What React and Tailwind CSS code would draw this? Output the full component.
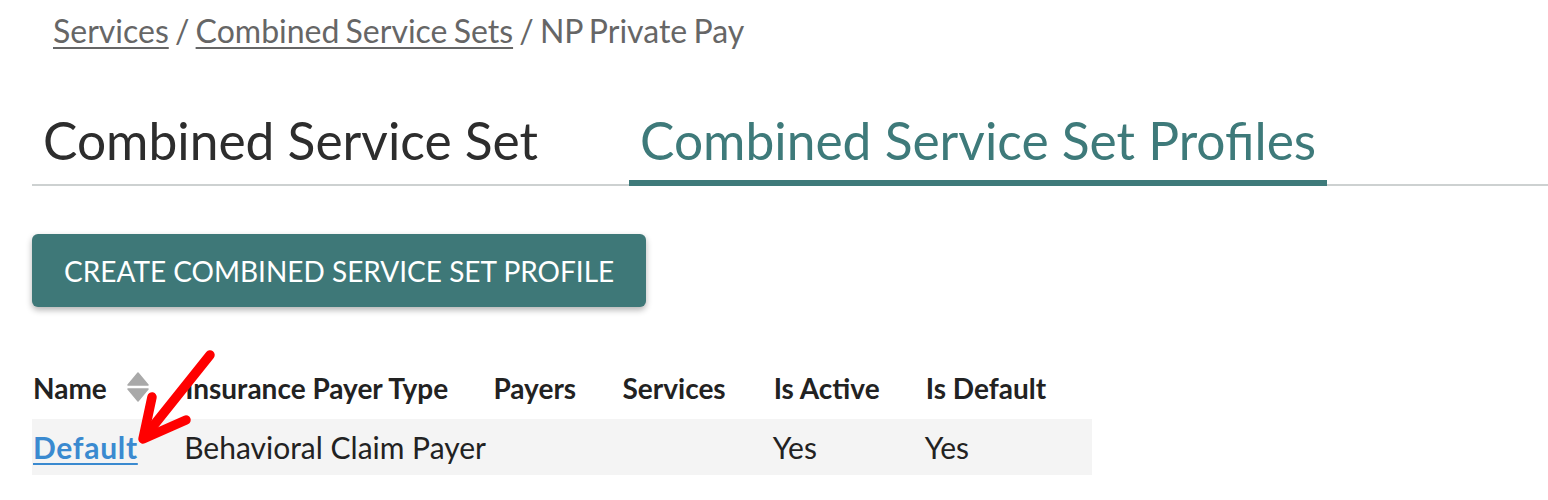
import React from "react";

const font = { fontFamily: "Lato, 'Open Sans', sans-serif" };

function SortIcon() {
  return (
    <svg width="22" height="30" viewBox="0 0 22 30" className="inline-block">
      <path d="M11 1 L21 13 H1 Z" fill="#a9a9a9" strokeLinejoin="round" stroke="#a9a9a9" strokeWidth="1.5" />
      <path d="M1 17 H21 L11 29 Z" fill="#a9a9a9" strokeLinejoin="round" stroke="#a9a9a9" strokeWidth="1.5" />
    </svg>
  );
}

function RedArrow() {
  return (
    <svg
      className="absolute pointer-events-none"
      style={{ left: 130, top: 340 }}
      width="100"
      height="110"
      viewBox="0 0 100 110"
    >
      <g stroke="#ff0000" strokeWidth="9.5" strokeLinecap="round" strokeLinejoin="round" fill="none">
        <line x1="80" y1="15" x2="16" y2="95" />
        <polyline points="22,57 13,99 56,80" />
      </g>
    </svg>
  );
}

export default function App() {
  const headers = [
    { label: "Name", w: "w-[152px]", sort: true },
    { label: "Insurance Payer Type", w: "w-[308px]" },
    { label: "Payers", w: "w-[129px]" },
    { label: "Services", w: "w-[151px]" },
    { label: "Is Active", w: "w-[152px]" },
    { label: "Is Default", w: "w-[167px]" },
  ];

  return (
    <div className="relative min-h-[500px] bg-white px-8 text-[#222]" style={font}>
      {/* Breadcrumb */}
      <div className="pl-[21px] pt-[11px] text-[32px] leading-[40px] text-[#666] [word-spacing:-2px]">
        <a className="underline decoration-2 underline-offset-4">Services</a>
        <span> / </span>
        <a className="underline decoration-2 underline-offset-4">Combined Service Sets</a>
        <span> / NP Private Pay</span>
      </div>

      {/* Tabs */}
      <div className="mt-[59px] flex items-end border-b-2 border-[#cdd1d1] -mr-8">
        <div className="px-[11px] pb-[14px] text-[51.5px] leading-[60px] text-[#2d2d2d]">
          Combined Service Set
        </div>
        <div className="ml-[80px] -mb-[2px] border-b-[6px] border-[#3e7a7a] px-[11px] pb-[10px] text-[51.5px] leading-[60px] text-[#3e7a7a]">
          Combined Service Set Profiles
        </div>
      </div>

      {/* Button */}
      <button className="mt-[48px] flex h-[73px] items-center rounded-md bg-[#3e7878] px-[32px] text-[28px] uppercase text-white shadow-[0_3px_6px_rgba(0,0,0,0.3)]">
        Create Combined Service Set Profile
      </button>

      {/* Table */}
      <table className="mt-[56px] w-[1060px] border-collapse">
        <thead>
          <tr className="h-[56px] text-[28px]">
            {headers.map((h) => (
              <th key={h.label} className={`${h.w} pl-[1px] pb-[6px] text-left align-middle font-bold text-[#222]`}>
                {h.sort ? (
                  <span className="flex items-center">
                    <span>Name</span>
                    <span className="ml-[20px] mt-[-2px] flex">
                      <SortIcon />
                    </span>
                  </span>
                ) : (
                  h.label
                )}
              </th>
            ))}
          </tr>
        </thead>
        <tbody>
          <tr className="h-[56px] bg-[#f4f4f4] text-[30px]">
            <td className="pl-[1px]">
              <a className="font-bold tracking-[0.7px] text-[#3a8ad0] underline decoration-2 underline-offset-4">Default</a>
            </td>
            <td>Behavioral Claim Payer</td>
            <td></td>
            <td></td>
            <td>Yes</td>
            <td>Yes</td>
          </tr>
        </tbody>
      </table>

      <RedArrow />
    </div>
  );
}
